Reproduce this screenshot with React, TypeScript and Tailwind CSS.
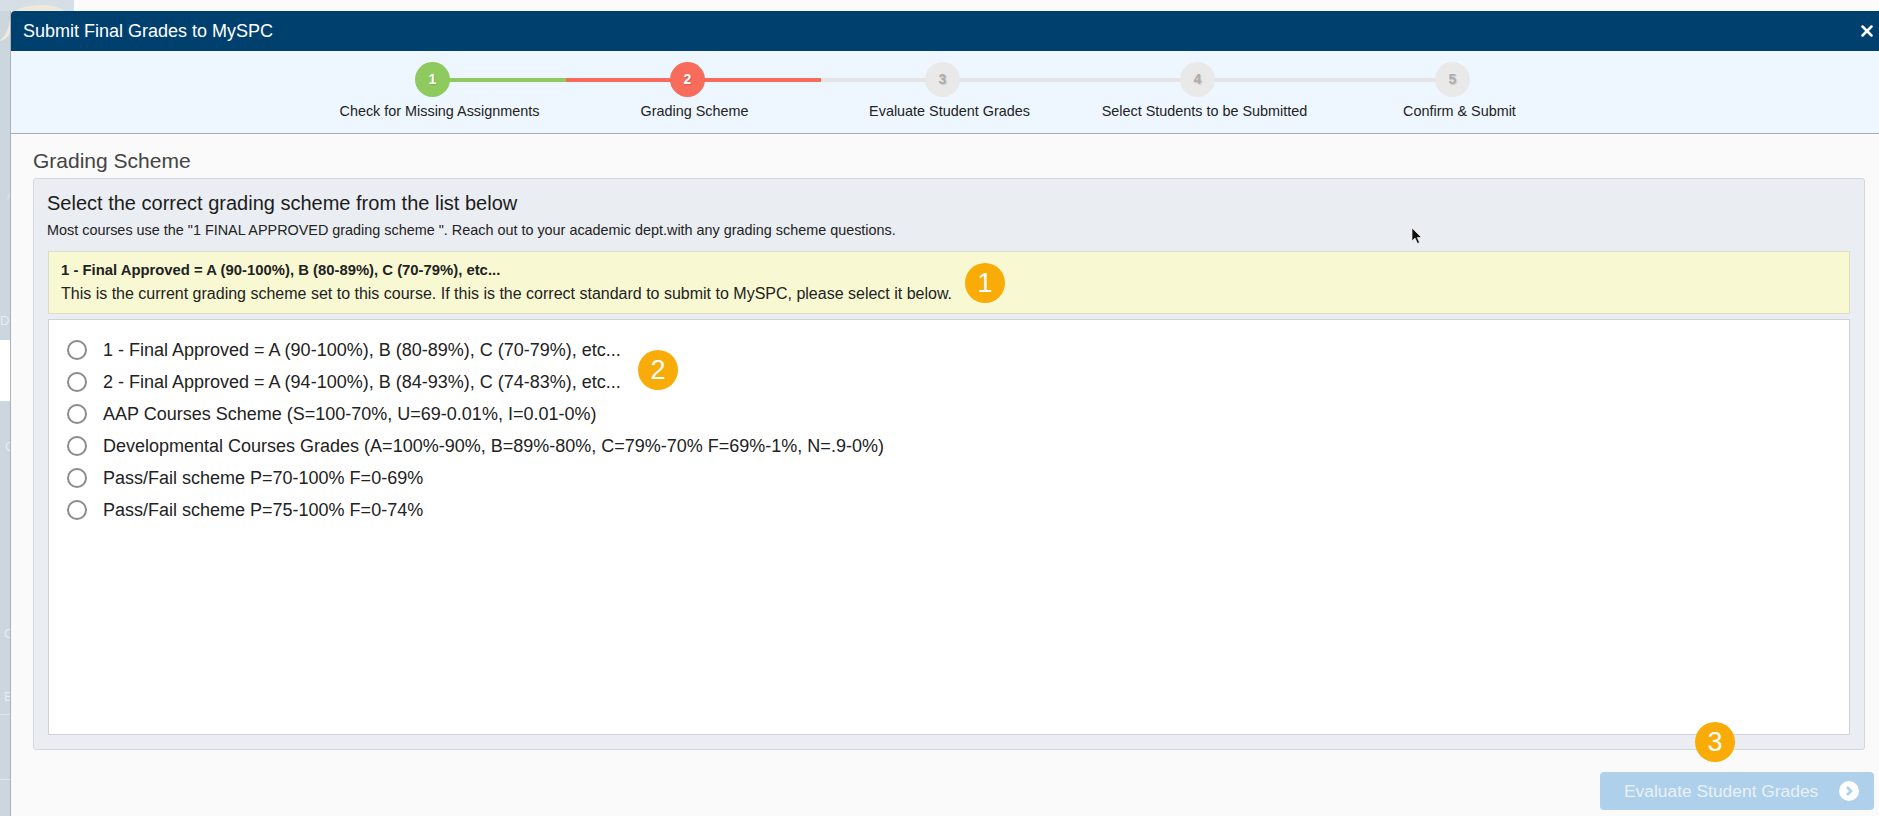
import React from 'react';
import { X } from 'lucide-react';

const steps = [
    { n: 1, label: 'Check for Missing Assignments', circle: 'bg-[#8fca5e] text-white' },
    { n: 2, label: 'Grading Scheme', circle: 'bg-[#f96b5b] text-white' },
    { n: 3, label: 'Evaluate Student Grades', circle: 'bg-[#e9e9e9] text-[#adadad]' },
    { n: 4, label: 'Select Students to be Submitted', circle: 'bg-[#e9e9e9] text-[#adadad]' },
    { n: 5, label: 'Confirm & Submit', circle: 'bg-[#e9e9e9] text-[#adadad]' },
];

const schemes = [
    '1 - Final Approved = A (90-100%), B (80-89%), C (70-79%), etc...',
    '2 - Final Approved = A (94-100%), B (84-93%), C (74-83%), etc...',
    'AAP Courses Scheme (S=100-70%, U=69-0.01%, I=0.01-0%)',
    'Developmental Courses Grades (A=100%-90%, B=89%-80%, C=79%-70% F=69%-1%, N=.9-0%)',
    'Pass/Fail scheme P=70-100% F=0-69%',
    'Pass/Fail scheme P=75-100% F=0-74%',
];

function Callout({ n, className }: { n: number; className: string }) {
    return (
        <div className={`absolute w-10 h-10 rounded-full bg-[#f9ac08] text-white text-[27px] flex items-center justify-center ${className}`}>
            {n}
        </div>
    );
}

export default function App() {
    return (
        <div className="relative w-[1879px] h-[816px] overflow-hidden flex flex-col bg-[#cfd9e2] font-['Liberation_Sans',Arial,sans-serif] text-[#222]">
            {/* page behind the dialog */}
            <div className="h-[11px] flex shrink-0">
                <div className="w-[74px] bg-[#d6dee6] relative overflow-hidden">
                    <svg className="absolute left-0 top-0" width="74" height="11" viewBox="0 0 74 11">
                        <path d="M14 11 Q26 4 46 5 Q58 6 64 11 Z" fill="#efe9dc" />
                    </svg>
                </div>
                <div className="flex-1 bg-[#fbfbfb]" />
            </div>

            <div className="flex-1 flex min-h-0">
                {/* sidebar strip */}
                <div className="w-[11px] shrink-0 bg-[#cbd6df] border-r border-[#aab1b8] flex flex-col text-[#e6ecf1] text-[13px] leading-none overflow-hidden">
                    <svg className="shrink-0" width="10" height="30" viewBox="0 0 10 30">
                        <path d="M10 8 Q8 24 0 29 L0 30 Q8 28 10 22 Z" fill="#efe9dc" />
                    </svg>
                    <div className="h-[160px] shrink-0 flex items-end pl-[7px] text-[#dfe6ec]">A</div>
                    <div className="h-[126px] shrink-0 flex items-end">D</div>
                    <div className="h-[61px] shrink-0 mt-[13px] bg-white" />
                    <div className="mt-[39px] pl-[5px]">C</div>
                    <div className="mt-[174px] pl-[4px]">C</div>
                    <div className="mt-[50px] pl-[4px]">B</div>
                    <div className="mt-[11px] h-px shrink-0 bg-[#e4e8dc]" />
                    <div className="mt-[64px] h-px shrink-0 bg-[#e4e8dc]" />
                </div>

                {/* dialog */}
                <div className="flex-1 flex flex-col min-w-0 bg-[#fafafa]">
                    <div className="h-10 shrink-0 bg-[#00406f] rounded-tl-[4px] flex items-center justify-between pl-[12px] pr-[3px] text-white">
                        <span className="text-[18px]">Submit Final Grades to MySPC</span>
                        <X size={18} strokeWidth={3.4} />
                    </div>

                    <div className="h-[83px] shrink-0 bg-[#eef7ff] border-b border-[#a8afb5] pt-[11px] pl-[301px]">
                        <div className="relative w-[1275px] flex">
                            <div className="absolute left-[120px] top-[16px] w-[134px] h-1 bg-[#8fca5e]" />
                            <div className="absolute left-[254px] top-[16px] w-[255px] h-1 bg-[#f96b5b]" />
                            <div className="absolute left-[509px] top-[16px] w-[630px] h-1 bg-[#e4e4e4]" />
                            {steps.map((s) => (
                                <div key={s.n} className="relative w-[255px] flex flex-col items-center">
                                    <div className={`w-[35px] h-[35px] -ml-[14px] rounded-full flex items-center justify-center text-[14px] font-bold [text-shadow:1px_1px_1px_rgba(0,0,0,0.15)] ${s.circle}`}>
                                        {s.n}
                                    </div>
                                    <div className="mt-[4px] text-[14.4px] leading-[20px] whitespace-nowrap">{s.label}</div>
                                </div>
                            ))}
                        </div>
                    </div>

                    <div className="flex-1 flex flex-col pl-[22px] pr-[5px] min-h-0">
                        <div className="h-[44px] shrink-0 pt-[15px] text-[21px] leading-[24px] text-[#444]">Grading Scheme</div>
                        <div className="mr-[9px] h-[572px] shrink-0 bg-[#eaeef2] border border-[#d5d8dc] rounded-[3px] flex flex-col px-[14px]">
                            <div className="text-[20px] leading-[24px] mt-[12px] -ml-px text-[#1c1c1c]">Select the correct grading scheme from the list below</div>
                            <div className="text-[14.4px] leading-[18px] mt-[6px] -ml-px">Most courses use the "1 FINAL APPROVED grading scheme ". Reach out to your academic dept.with any grading scheme questions.</div>
                            <div className="mt-[12px] h-[63px] shrink-0 bg-[#f8f9d2] border border-[#dcdcc6] px-3 pt-[8px]">
                                <div className="font-bold text-[14.85px] leading-[20px] mb-[2px]">1 - Final Approved = A (90-100%), B (80-89%), C (70-79%), etc...</div>
                                <div className="text-[16px] leading-[24px]">This is the current grading scheme set to this course. If this is the correct standard to submit to MySPC, please select it below.</div>
                            </div>
                            <div className="mt-[5px] h-[416px] shrink-0 bg-white border border-[#cfd2d6] pt-[14px] pl-[18px]">
                                {schemes.map((s) => (
                                    <label key={s} className="h-8 flex items-center gap-[16px]">
                                        <span className="w-[20px] h-[20px] rounded-full border-2 border-[#8b8b8b] bg-white shrink-0" />
                                        <span className="text-[18px] whitespace-nowrap">{s}</span>
                                    </label>
                                ))}
                            </div>
                        </div>
                        <div className="flex justify-end mt-[22px]">
                            <button type="button" className="w-[274px] h-[38px] rounded-[4px] bg-[#aed0ea] text-[#e9f1f8] text-[17.4px] flex items-center justify-between pl-[24px] pr-[15px]">
                                Evaluate Student Grades
                                <span className="w-5 h-5 rounded-full bg-white flex items-center justify-center">
                                    <svg width="10" height="12" viewBox="0 0 10 12">
                                        <path d="M3 2 L7 6 L3 10" fill="none" stroke="#aed0ea" strokeWidth="2.6" />
                                    </svg>
                                </span>
                            </button>
                        </div>
                    </div>
                </div>
            </div>

            {/* annotations on top of the shot */}
            <Callout n={1} className="left-[965px] top-[263px]" />
            <Callout n={2} className="left-[638px] top-[350px]" />
            <Callout n={3} className="left-[1695px] top-[722px]" />
            <svg className="absolute left-[1411px] top-[227px]" width="12" height="18" viewBox="0 0 12 18">
                <path d="M1 1 L1 14 L4 11 L6.5 16.5 L8.5 15.5 L6.2 10.5 L10.5 10.5 Z" fill="#111" stroke="#fff" strokeWidth="0.6" />
            </svg>
        </div>
    );
}
